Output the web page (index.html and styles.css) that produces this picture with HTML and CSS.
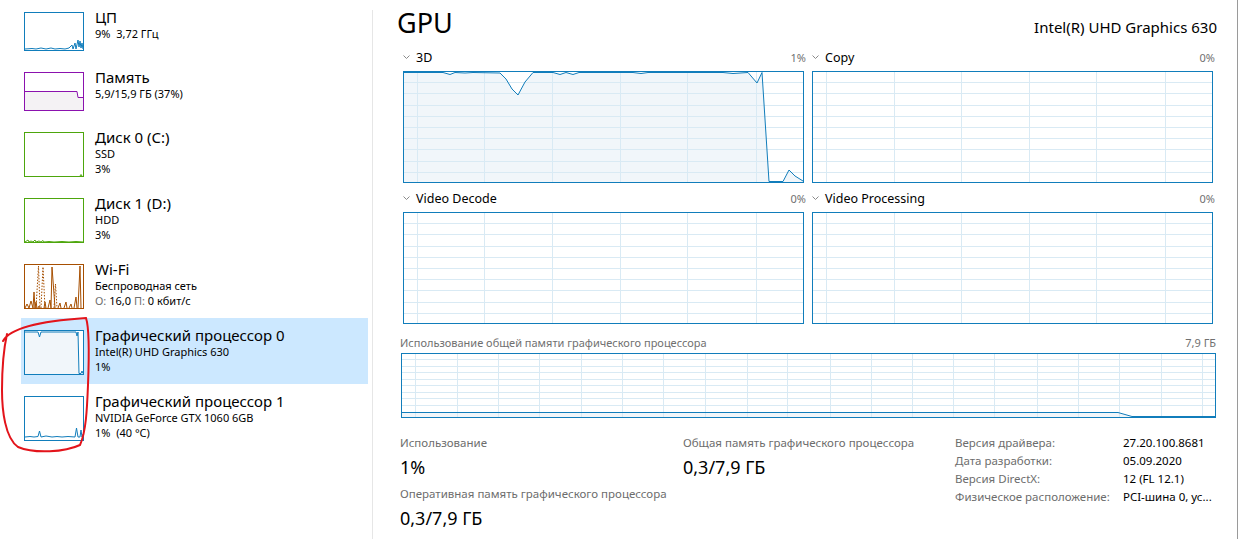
FILE: index.html
```html
<!DOCTYPE html>
<html lang="ru">
<head>
<meta charset="utf-8">
<title>GPU</title>
<link rel="stylesheet" href="styles.css">
</head>
<body>
<div class="app">
  <aside class="sidebar">
    <div class="item two">
      <svg class="thumb" width="60" height="39" viewBox="0 0 60 39">
        <path d="M1 37 L8 36.5 L12 37 L17 36 L22 37 L27 36 L31 37 L36 36.5 L41 37 L45 36 L48 33 L49 37 L51 31 L52 37 L54 28 L55 35 L56 29 L57 36 L58 31 L59 37" fill="none" stroke="#117dbb"/>
        <rect x="0.5" y="0.5" width="59" height="38" fill="none" stroke="#117dbb"/>
      </svg>
      <div class="info"><div class="title">ЦП</div><div class="sub">9%&nbsp; 3,72 ГГц</div></div>
    </div>
    <div class="item two">
      <svg class="thumb" width="60" height="39" viewBox="0 0 60 39">
        <path d="M1 19.5 H53 L54 25.5 H59 V38 H1 Z" fill="#f4f2f4"/>
        <path d="M1 19.5 H53 L54 25.5 H59" fill="none" stroke="#8b12ae"/>
        <rect x="0.5" y="0.5" width="59" height="38" fill="none" stroke="#8b12ae"/>
      </svg>
      <div class="info"><div class="title">Память</div><div class="sub">5,9/15,9 ГБ (37%)</div></div>
    </div>
    <div class="item three">
      <svg class="thumb" width="60" height="45" viewBox="0 0 60 45">
        <path d="M56 44 L57 42.5 L58 44" fill="none" stroke="#4da60c"/>
        <rect x="0.5" y="0.5" width="59" height="44" fill="none" stroke="#4da60c"/>
      </svg>
      <div class="info"><div class="title">Диск 0 (C:)</div><div class="sub">SSD</div><div class="sub">3%</div></div>
    </div>
    <div class="item three">
      <svg class="thumb" width="60" height="45" viewBox="0 0 60 45">
        <path d="M1 44 L4 42 L5 44 L7 43 L9 44 L11 42 L12 44 L15 43 L17 44 L19 42.5 L20 44 L25 43.5 L30 44 L38 43.5 L45 44 L52 43.5 L59 44" fill="none" stroke="#4da60c"/>
        <rect x="0.5" y="0.5" width="59" height="44" fill="none" stroke="#4da60c"/>
      </svg>
      <div class="info"><div class="title">Диск 1 (D:)</div><div class="sub">HDD</div><div class="sub">3%</div></div>
    </div>
    <div class="item three">
      <svg class="thumb" width="60" height="45" viewBox="0 0 60 45">
        <path d="M1 44 L3 40 L5 44 L7 37 L9 44 L10 28 L11 44 L12 38 L13 44 M14 44 L15 42 L16 44 M20 44 L21 38 L22 44 M24 44 L26 36 L27 44 M27 44 L28 3 L30 30 L31 44 M34 44 L36 39 L37 44 M40 44 L42 38 L43 44 M45 44 L47 40 L48 44 M50 44 L52 33 L53 44 M54 44 L56 2 L57 44" fill="none" stroke="#a74f01"/>
        <path d="M12 44 L14.5 2 L16 44 M17 44 L19 3 L21 44 M30 44 L31.5 20 L33 44" fill="none" stroke="#a74f01" stroke-dasharray="1.5 1.5"/>
        <rect x="0.5" y="0.5" width="59" height="44" fill="none" stroke="#a74f01"/>
      </svg>
      <div class="info"><div class="title">Wi-Fi</div><div class="sub">Беспроводная сеть</div><div class="sub"><span class="dim">О:</span> 16,0 <span class="dim">П:</span> 0 кбит/с</div></div>
    </div>
    <div class="item three selected">
      <svg class="thumb" width="60" height="45" viewBox="0 0 60 45">
        <path d="M1 2 L14 2 L15.5 7 L17 2 L52 2 L53 6 L54 2 L55 44 L1 44 Z" fill="#f1f6fa"/>
        <path d="M1 2 L14 2 L15.5 7 L17 2 L52 2 L53 6 L54 2 L55 43.5 L57 43.5 L58 41 L59 43.5" fill="none" stroke="#117dbb"/>
        <rect x="0.5" y="0.5" width="59" height="44" fill="none" stroke="#117dbb"/>
      </svg>
      <div class="info"><div class="title">Графический процессор 0</div><div class="sub">Intel(R) UHD Graphics 630</div><div class="sub">1%</div></div>
    </div>
    <div class="item three">
      <svg class="thumb" width="60" height="45" viewBox="0 0 60 45">
        <path d="M1 41 L6 40.5 L10 41 L14 40.5 L15.5 35 L17 41 L22 40 L28 41 L33 40.5 L38 41 L44 40.5 L51 41 L52.5 32 L54 41 L56 41 L57 34 L58 41 L59 38" fill="none" stroke="#117dbb"/>
        <rect x="0.5" y="0.5" width="59" height="44" fill="none" stroke="#117dbb"/>
      </svg>
      <div class="info"><div class="title">Графический процессор 1</div><div class="sub">NVIDIA GeForce GTX 1060 6GB</div><div class="sub">1%&nbsp; (40 °C)</div></div>
    </div>
  </aside>
  <div class="divider"></div>
  <main class="main">
    <header class="header">
      <h1 class="gpu-title">GPU</h1>
      <div class="gpu-name">Intel(R) UHD Graphics 630</div>
    </header>
    <section class="charts">
      <div class="block">
        <div class="label-row"><span class="lbl"><svg class="chev" width="7" height="5" viewBox="0 0 7 5"><path d="M0.5 0.5 L3.5 3.5 L6.5 0.5" fill="none" stroke="#8a8a8a"/></svg>3D</span><span class="pct">1%</span></div>
        <svg class="chart" width="401" height="112" viewBox="0 0 401 112">
          <path d="M0 1.5 L40 1.5 L47 3.5 L52 1.5 L62 2 L70 1.5 L97 2 L103 8 L109 18 L115 24 L122 11 L130 1.5 L150 1.5 L157 3.5 L163 1.5 L170 3.5 L176 1.5 L230 1.5 L238 2.5 L245 1.5 L320 1.5 L330 2.5 L345 1.5 L354 12 L359 1.5 L366 111 L380 111 L386 99 L392 105 L400 110 L400 112 L0 112 Z" fill="#f1f6fa"/>
          <path class="grid" d="M14.5 0V112M81.5 0V112M149.5 0V112M217.5 0V112M284.5 0V112M353.5 0V112M0 11.5H401M0 22.5H401M0 34.5H401M0 45.5H401M0 56.5H401M0 67.5H401M0 78.5H401M0 90.5H401M0 101.5H401"/>
          <path d="M0 1.5 L40 1.5 L47 3.5 L52 1.5 L62 2 L70 1.5 L97 2 L103 8 L109 18 L115 24 L122 11 L130 1.5 L150 1.5 L157 3.5 L163 1.5 L170 3.5 L176 1.5 L230 1.5 L238 2.5 L245 1.5 L320 1.5 L330 2.5 L345 1.5 L354 12 L359 1.5 L366 110.5 L380 110.5 L386 99 L392 105 L400 110" fill="none" stroke="#117dbb"/>
          <rect x="0.5" y="0.5" width="400" height="111" fill="none" stroke="#117dbb"/>
        </svg>
      </div>
      <div class="block">
        <div class="label-row"><span class="lbl col2"><svg class="chev" width="7" height="5" viewBox="0 0 7 5"><path d="M0.5 0.5 L3.5 3.5 L6.5 0.5" fill="none" stroke="#8a8a8a"/></svg>Copy</span><span class="pct">0%</span></div>
        <svg class="chart" width="401" height="112" viewBox="0 0 401 112">
          <path class="grid" d="M14.5 0V112M82.5 0V112M149.5 0V112M217.5 0V112M284.5 0V112M353.5 0V112M0 11.5H401M0 22.5H401M0 34.5H401M0 45.5H401M0 56.5H401M0 67.5H401M0 78.5H401M0 90.5H401M0 101.5H401"/>
          <rect x="0.5" y="0.5" width="400" height="111" fill="none" stroke="#117dbb"/>
        </svg>
      </div>
      <div class="block">
        <div class="label-row"><span class="lbl"><svg class="chev" width="7" height="5" viewBox="0 0 7 5"><path d="M0.5 0.5 L3.5 3.5 L6.5 0.5" fill="none" stroke="#8a8a8a"/></svg>Video Decode</span><span class="pct">0%</span></div>
        <svg class="chart" width="401" height="112" viewBox="0 0 401 112">
          <path class="grid" d="M14.5 0V112M81.5 0V112M149.5 0V112M217.5 0V112M284.5 0V112M353.5 0V112M0 11.5H401M0 22.5H401M0 34.5H401M0 45.5H401M0 56.5H401M0 67.5H401M0 78.5H401M0 90.5H401M0 101.5H401"/>
          <rect x="0.5" y="0.5" width="400" height="111" fill="none" stroke="#117dbb"/>
        </svg>
      </div>
      <div class="block">
        <div class="label-row"><span class="lbl col2"><svg class="chev" width="7" height="5" viewBox="0 0 7 5"><path d="M0.5 0.5 L3.5 3.5 L6.5 0.5" fill="none" stroke="#8a8a8a"/></svg>Video Processing</span><span class="pct">0%</span></div>
        <svg class="chart" width="401" height="112" viewBox="0 0 401 112">
          <path class="grid" d="M14.5 0V112M82.5 0V112M149.5 0V112M217.5 0V112M284.5 0V112M353.5 0V112M0 11.5H401M0 22.5H401M0 34.5H401M0 45.5H401M0 56.5H401M0 67.5H401M0 78.5H401M0 90.5H401M0 101.5H401"/>
          <rect x="0.5" y="0.5" width="400" height="111" fill="none" stroke="#117dbb"/>
        </svg>
      </div>
    </section>
    <section class="memory">
      <div class="mem-row"><span>Использование общей памяти графического процессора</span><span>7,9 ГБ</span></div>
      <svg class="mem-chart" width="815" height="65" viewBox="0 0 815 65">
        <path d="M0 59.5 H717 L731 63.5 H815 V65 H0 Z" fill="#f1f6fa"/>
        <path class="grid" d="M14.5 0V65M56.5 0V65M97.5 0V65M138.5 0V65M180.5 0V65M221.5 0V65M262.5 0V65M304.5 0V65M346.5 0V65M386.5 0V65M429.5 0V65M470.5 0V65M511.5 0V65M552.5 0V65M593.5 0V65M636.5 0V65M677.5 0V65M718.5 0V65M760.5 0V65M801.5 0V65M0 6.5H815M0 13.5H815M0 19.5H815M0 26.5H815M0 32.5H815M0 39.5H815M0 45.5H815M0 52.5H815"/>
        <path d="M0 59.5 H717 L731 63.5 H815" fill="none" stroke="#117dbb"/>
        <rect x="0.5" y="0.5" width="814" height="64" fill="none" stroke="#117dbb"/>
      </svg>
    </section>
    <section class="stats">
      <div class="col col1">
        <div class="stat"><div class="stat-label">Использование</div><div class="stat-value">1%</div></div>
        <div class="stat"><div class="stat-label">Оперативная память графического процессора</div><div class="stat-value">0,3/7,9 ГБ</div></div>
      </div>
      <div class="col col2">
        <div class="stat"><div class="stat-label">Общая память графического процессора</div><div class="stat-value">0,3/7,9 ГБ</div></div>
      </div>
      <dl class="props">
        <dt>Версия драйвера:</dt><dd>27.20.100.8681</dd>
        <dt>Дата разработки:</dt><dd>05.09.2020</dd>
        <dt>Версия DirectX:</dt><dd>12 (FL 12.1)</dd>
        <dt>Физическое расположение:</dt><dd>PCI-шина 0, ус...</dd>
      </dl>
    </section>
  </main>
  <div class="edge"></div>
</div>
<svg class="annot" width="100" height="170" viewBox="0 300 100 170">
  <path d="M3 341 C10 328, 40 321, 86 318 C90 330, 89 360, 88 385 C87 410, 86 432, 80 445 C65 452, 35 454, 18 447 C5 438, 2 410, 2 390 C2 370, 3 352, 7 334" fill="none" stroke="#e3141b" stroke-width="2" stroke-linecap="round"/>
</svg>
</body>
</html>
```

FILE: styles.css
```css
* { box-sizing: border-box; margin: 0; padding: 0; }
html, body { width: 1243px; height: 539px; }
body {
  overflow: hidden;
  background: #fff;
  color: #000;
  font-family: "Noto Sans", "Open Sans", sans-serif;
  position: relative;
}
.app { display: flex; height: 539px; }

.sidebar { width: 372px; flex: none; padding: 0 4px 0 21px; }
.item { display: flex; align-items: flex-start; padding: 12px 0 9px 3px; }
.item.selected { background: #cce8ff; }
.thumb { display: block; flex: none; background: #fff; }
.info { margin-left: 11px; margin-top: -4px; }
.title { font-size: 15px; line-height: 18px; white-space: nowrap; }
.sub { font-size: 11px; line-height: 15px; white-space: nowrap; }
.dim { color: #707070; }

.divider { width: 1px; flex: none; margin-top: 10px; background: #e6e6e6; }

.main { width: 864px; flex: none; padding: 0 21px 0 27px; }
.header {
  display: flex; justify-content: space-between; align-items: baseline;
  height: 50px; padding-top: 5px;
}
.gpu-title { font-size: 27px; line-height: 36px; font-weight: 400; margin-left: -3px; }
.gpu-name { font-size: 15px; line-height: 20px; margin-right: -1px; }

.charts {
  display: grid; grid-template-columns: 404px 404px; column-gap: 5px; margin-left: 2px;
}
.label-row {
  display: flex; justify-content: space-between; align-items: center;
  height: 18px; margin-bottom: 3px; padding-bottom: 3px;
}
.lbl { display: flex; align-items: center; font-size: 12.5px; margin-left: 1px; }
.lbl.col2 { margin-left: 1px; }
.chev { display: block; margin-right: 6px; }
.pct { font-size: 11px; color: #707070; }
.chart { display: block; margin-left: 1px; margin-bottom: 8px; }
.grid { stroke: #d9eaf4; stroke-width: 1; fill: none; }

.memory { margin-top: 1px; }
.mem-row {
  display: flex; justify-content: space-between; align-items: center;
  height: 18px; margin-bottom: 2px; font-size: 11px; color: #707070;
}
.mem-chart { display: block; margin-left: 1px; }

.stats { display: flex; align-items: flex-start; margin-top: 16px; }
.col1 { width: 283px; }
.col2 { width: 272px; }
.stat + .stat { margin-top: 5px; }
.stat-label { font-size: 11.5px; line-height: 18px; color: #6d6d6d; white-space: nowrap; }
.stat-value { font-size: 18px; line-height: 26px; margin-top: 2px; }
.props {
  display: grid; grid-template-columns: 168px auto; align-content: start;
  font-size: 11.5px; line-height: 18px;
}
.props dt { color: #6d6d6d; }
.props dd { color: #000; }

.edge { width: 1px; flex: none; background: #9a9a9a; }

.annot { position: absolute; left: 0; top: 300px; }
```
